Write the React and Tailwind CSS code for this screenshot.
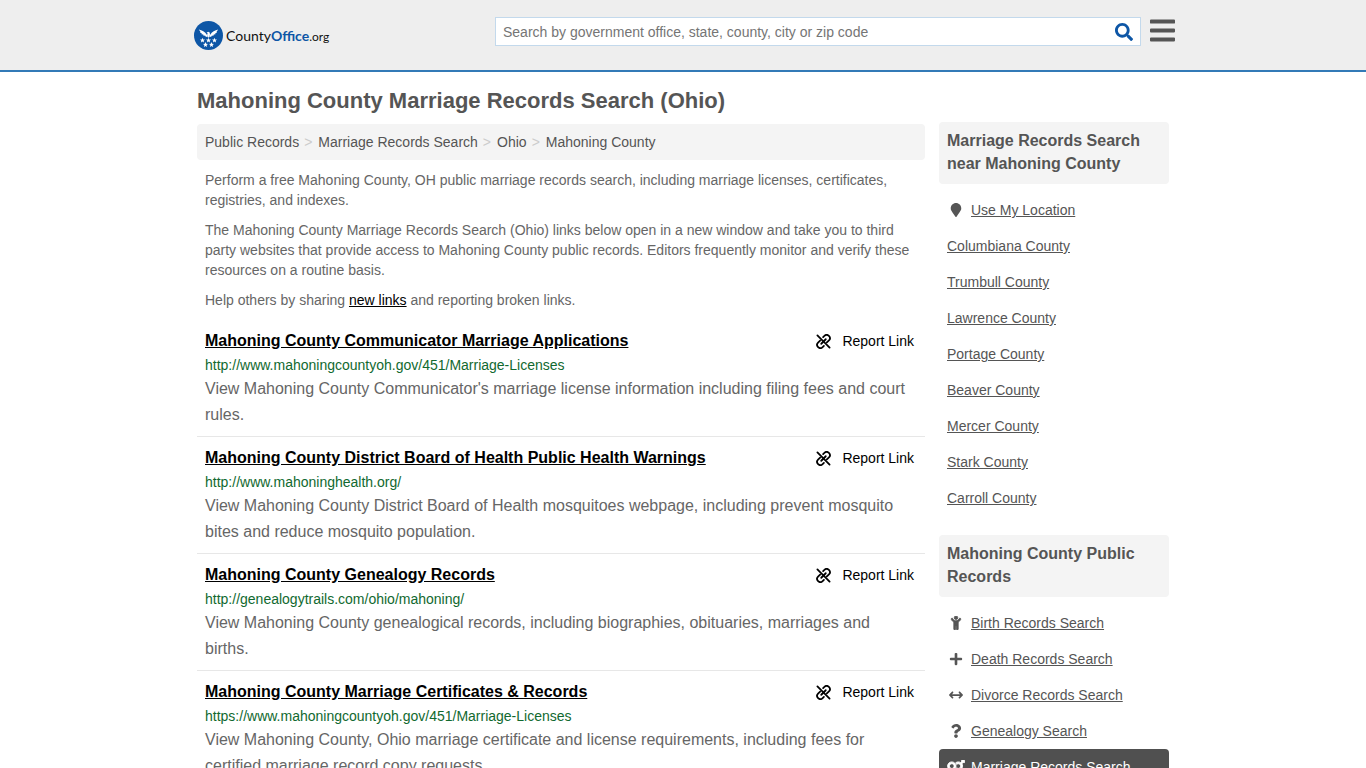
import React from 'react';
import { FaBars, FaMapMarker, FaPlus, FaQuestion, FaSearch, FaVenusMars } from 'react-icons/fa';
import { FaArrowsLeftRight, FaChildReaching } from 'react-icons/fa6';

const crumbs = ['Public Records', 'Marriage Records Search', 'Ohio', 'Mahoning County'];

const records = [
  {
    title: 'Mahoning County Communicator Marriage Applications',
    url: 'http://www.mahoningcountyoh.gov/451/Marriage-Licenses',
    text: "View Mahoning County Communicator's marriage license information including filing fees and court rules.",
  },
  {
    title: 'Mahoning County District Board of Health Public Health Warnings',
    url: 'http://www.mahoninghealth.org/',
    text: 'View Mahoning County District Board of Health mosquitoes webpage, including prevent mosquito bites and reduce mosquito population.',
  },
  {
    title: 'Mahoning County Genealogy Records',
    url: 'http://genealogytrails.com/ohio/mahoning/',
    text: 'View Mahoning County genealogical records, including biographies, obituaries, marriages and births.',
  },
  {
    title: 'Mahoning County Marriage Certificates & Records',
    url: 'https://www.mahoningcountyoh.gov/451/Marriage-Licenses',
    text: 'View Mahoning County, Ohio marriage certificate and license requirements, including fees for certified marriage record copy requests.',
  },
];

const nearby = [
  { label: 'Use My Location', icon: FaMapMarker },
  { label: 'Columbiana County' },
  { label: 'Trumbull County' },
  { label: 'Lawrence County' },
  { label: 'Portage County' },
  { label: 'Beaver County' },
  { label: 'Mercer County' },
  { label: 'Stark County' },
  { label: 'Carroll County' },
];

const publicRecords = [
  { label: 'Birth Records Search', icon: FaChildReaching, bold: true },
  { label: 'Death Records Search', icon: FaPlus },
  { label: 'Divorce Records Search', icon: FaArrowsLeftRight },
  { label: 'Genealogy Search', icon: FaQuestion },
  { label: 'Marriage Records Search', icon: FaVenusMars, bold: true, active: true },
];

const STAR = 'M0 -2.6L.7 -.9L2.5 -.8L1.1 .4L1.6 2.2L0 1.2L-1.6 2.2L-1.1 .4L-2.5 -.8L-.7 -.9Z';

const Logo = () => (
  <a href="#" className="flex items-center gap-[3px] text-[14px] leading-5 text-[#111]">
    <svg className="h-[29px] w-[29px]" viewBox="0 0 29 29" aria-hidden="true">
      <circle cx="14.5" cy="14.5" r="14.5" fill="#0d56a6" />
      <g fill="#fff">
        {/* eagle: left wing, right wing, head and body */}
        <path d="M4.800 8.500C8 9.200 11 10.600 13 14L13.800 16.300L11.500 15.600L11.300 14.800L9.300 14.600L9.300 13.600L7.500 13.200L7.700 12.200L6 11.500L6.400 10.700Z" />
        <path d="M24.200 8.500C21 9.200 18 10.600 16 14L15.200 16.300L17.500 15.600L17.700 14.800L19.700 14.600L19.700 13.600L21.500 13.200L21.300 12.200L23 11.500L22.600 10.700Z" />
        <path d="M12.600 11.700L14.200 10.800L15.700 11.500L16 14L14.500 17L13 14L13.800 12.500Z" />
        {[[8.500, 19.300], [14.500, 19.300], [20.500, 19.300], [11.500, 23.700], [17.500, 23.700]].map(([x, y]) => (
          <path key={x} d={STAR} transform={`translate(${x} ${y})`} />
        ))}
      </g>
    </svg>
    <span className="pt-0.5 font-[Lato,sans-serif]">
      County<b className="font-bold text-[#0d56a6]">Office</b>
      <span className="text-xs">.org</span>
    </span>
  </a>
);

const BrokenLink = () => (
  <svg
    className="h-[15px] w-[15px]"
    viewBox="0 0 16 16"
    fill="none"
    stroke="currentColor"
    strokeWidth="1.9"
    strokeLinecap="round"
    aria-hidden="true"
  >
    <path d="M1.500 1.500L14.500 14.500" />
    <path d="M7.600 3.300L8.900 2.100A3.400 3.400 0 0 1 13.800 6.900L11.600 9" />
    <path d="M8.400 12.700L7.100 13.900A3.400 3.400 0 0 1 2.200 9.100L4.400 7" />
    <path d="M5.600 10.400L10.400 5.600" />
  </svg>
);

const Record = ({ title, url, text }) => (
  <li className="border-b border-[#e7e7e7] px-2 pt-[9px] pb-2">
    <div className="flex items-center justify-between">
      <h2 className="text-base leading-6 font-bold text-black">
        <a href={url} className="underline">{title}</a>
      </h2>
      <button type="button" className="mr-[3px] flex h-6 items-center gap-[11px] text-sm text-black">
        <BrokenLink />
        Report Link
      </button>
    </div>
    <p className="mt-0.5 text-sm leading-[21px] text-[#11692f]">{url}</p>
    <p className="text-base leading-[26px] text-[#666]">{text}</p>
  </li>
);

const SideSection = ({ title, items }) => (
  <section>
    <h3 className="rounded bg-[#f4f4f4] px-2 pt-[7px] pb-[9px] text-base leading-[23px] font-bold">{title}</h3>
    <ul className="mt-2 text-sm">
      {items.map(({ label, icon: Icon, bold, active }) => (
        <li key={label}>
          <a
            href="#"
            className={
              active
                ? 'flex h-9 items-center rounded bg-[#505050] px-2 text-white underline'
                : 'flex h-9 items-center px-2 underline'
            }
          >
            {Icon && (
              <span className="mr-1.5 flex w-[18px] justify-center">
                <Icon
                  className={active ? 'h-[15px] w-[18px]' : 'h-3.5'}
                  strokeWidth={bold ? 30 : 0}
                  aria-hidden="true"
                />
              </span>
            )}
            {label}
          </a>
        </li>
      ))}
    </ul>
  </section>
);

export default function App() {
  return (
    <div className="bg-white font-['Liberation_Sans',Arial,sans-serif] text-[#555]">
      <header className="border-b-2 border-[#337ab7] bg-[#eee]">
        <div className="mx-auto flex h-[70px] max-w-[982px] items-center justify-between pl-0.5">
          <Logo />
          <div className="-mr-px mb-[7px] flex items-center gap-[9px]">
            <form className="flex h-[29px] w-[646px] items-center border border-[#c3d9ec] bg-white pr-[7px]">
              <input
                type="text"
                aria-label="Search"
                placeholder="Search by government office, state, county, city or zip code"
                className="min-w-0 flex-1 px-[7px] text-sm outline-none placeholder:text-[#757575]"
              />
              <button type="submit" aria-label="Submit search" className="text-[#0d56a6]">
                <FaSearch className="h-[18px] w-[18px]" />
              </button>
            </form>
            <button type="button" aria-label="Menu" className="pb-0.5">
              <FaBars className="h-[29px] w-[25px]" />
            </button>
          </div>
        </div>
      </header>

      <div className="mx-auto flex max-w-[972px] gap-3.5">
        <main className="min-w-0 flex-1">
          <h1 className="pt-4 pb-2.5 text-[22px] leading-[26px] font-bold">
            Mahoning County Marriage Records Search (Ohio)
          </h1>
          <nav aria-label="Breadcrumb" className="rounded bg-[#f4f4f4] px-2 py-2">
            <ol className="flex text-sm leading-5">
              {crumbs.map((crumb, i) => (
                <li key={crumb} className="flex">
                  {i > 0 && <span className="pr-1.5 pl-[5px] text-[#ccc]">&gt;</span>}
                  <a href="#">{crumb}</a>
                </li>
              ))}
            </ol>
          </nav>
          <div className="space-y-2.5 px-2 py-2.5 text-sm leading-5 text-[#666]">
            <p>
              Perform a free Mahoning County, OH public marriage records search, including marriage licenses,
              certificates, registries, and indexes.
            </p>
            <p>
              The Mahoning County Marriage Records Search (Ohio) links below open in a new window and take you to
              third party websites that provide access to Mahoning County public records. Editors frequently monitor
              and verify these resources on a routine basis.
            </p>
            <p>
              Help others by sharing <a href="#" className="text-black underline">new links</a> and reporting broken
              links.
            </p>
          </div>
          <ul>
            {records.map((record) => (
              <Record key={record.title} {...record} />
            ))}
          </ul>
        </main>

        <aside className="w-[230px] shrink-0 space-y-[19px] pt-[50px]">
          <SideSection title="Marriage Records Search near Mahoning County" items={nearby} />
          <SideSection title="Mahoning County Public Records" items={publicRecords} />
        </aside>
      </div>
    </div>
  );
}
